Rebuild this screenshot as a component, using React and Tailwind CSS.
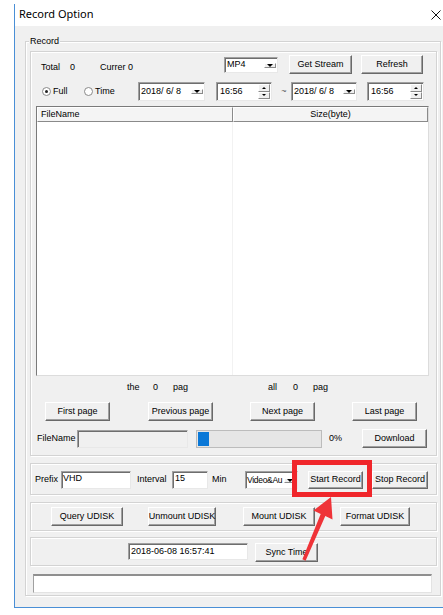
import React from 'react';

// raised windows-classic push button
function Btn({ className = '', children }) {
    return (
        <div className={`flex shrink-0 items-center justify-center whitespace-nowrap bg-[#f0f0f0] border border-t-white border-l-white border-r-[#696969] border-b-[#696969] shadow-[inset_-1px_-1px_0_#a0a0a0] ${className}`}>
            {children}
        </div>
    );
}

// sunken edit box
function Field({ className = '', children }) {
    return (
        <div className={`flex shrink-0 items-center overflow-hidden whitespace-pre border border-t-[#a0a0a0] border-l-[#a0a0a0] border-r-[#e8e8e8] border-b-[#e8e8e8] shadow-[inset_1px_1px_0_#6e6e6e] ${className}`}>
            {children}
        </div>
    );
}

const Down = () => (
    <div className="w-0 h-0 border-l-[3px] border-r-[3px] border-t-[3px] border-l-transparent border-r-transparent border-t-black" />
);

function DropBtn() {
    return (
        <div className="flex w-[12px] shrink-0 items-center justify-center my-[1px] mr-[1px] bg-[#f0f0f0] border border-t-white border-l-white border-r-[#8a8a8a] border-b-[#8a8a8a]">
            <Down />
        </div>
    );
}

function Combo({ className = '', text, textClass = 'pl-[2px]' }) {
    return (
        <Field className={`bg-white ${className}`}>
            <span className={`flex-1 overflow-hidden ${textClass}`}>{text}</span>
            <DropBtn />
        </Field>
    );
}

function Spin({ className = '', text }) {
    return (
        <Field className={`bg-white ${className}`}>
            <span className="flex-1 pl-[3px]">{text}</span>
            <div className="flex w-[12px] self-stretch flex-col my-[1px] mr-[1px]">
                <div className="flex flex-1 items-center justify-center bg-[#f0f0f0] border border-t-white border-l-white border-r-[#8a8a8a] border-b-[#8a8a8a]">
                    <div className="w-0 h-0 border-l-[2px] border-r-[2px] border-b-[2px] border-l-transparent border-r-transparent border-b-black" />
                </div>
                <div className="flex flex-1 items-center justify-center bg-[#f0f0f0] border border-t-white border-l-white border-r-[#8a8a8a] border-b-[#8a8a8a]">
                    <div className="w-0 h-0 border-l-[2px] border-r-[2px] border-t-[2px] border-l-transparent border-r-transparent border-t-black" />
                </div>
            </div>
        </Field>
    );
}

function Radio({ checked, label, className = '' }) {
    return (
        <div className={`flex shrink-0 items-center ${className}`}>
            <div className="flex w-[9px] h-[9px] items-center justify-center rounded-full border border-[#8a8a8a] bg-white">
                {checked && <div className="w-[3px] h-[3px] rounded-full bg-[#222]" />}
            </div>
            <span className="ml-[2px]">{label}</span>
        </div>
    );
}

const panel = 'box-border w-[407px] border border-[#d3d3d3] shadow-[inset_1px_1px_0_#fff,1px_1px_0_#fff]';

export default function App() {
    return (
        <div className="relative w-[443px] h-[615px] overflow-hidden bg-white text-[9px] text-black font-['Liberation_Sans',Arial,sans-serif]">
            <div className="mt-[4px] ml-[14px] w-[429px] border-l border-b border-[#4a8fd6]">
                {/* title bar */}
                <div className="flex h-[22px] items-center justify-between bg-white pl-[4px] pr-[2px] pb-[2px]">
                    <span className="text-[11px] font-['Noto_Sans',sans-serif]">Record Option</span>
                    <svg width="10" height="10" viewBox="0 0 10 10" className="mt-[2px]">
                        <path d="M0.5 0.5 L9.5 9.5 M9.5 0.5 L0.5 9.5" stroke="#111" strokeWidth="1" />
                    </svg>
                </div>

                <div className="h-[581px] bg-[#f0f0f0] pt-[15px]">
                    {/* Record group */}
                    <div className="relative box-border ml-[10px] w-[416px] h-[555px] border border-[#d3d3d3] shadow-[inset_1px_1px_0_#fff,1px_1px_0_#fff] pt-[9px] pl-[4px]">
                        <span className="absolute left-[3px] top-[-7px] bg-[#f0f0f0] px-[1px] leading-[12px]">Record</span>

                        <div className={`${panel} h-[405px] pt-[3px]`}>
                            <div className="flex h-[19px] items-start">
                                <span className="ml-[10px] w-[29px] mt-[6px] shrink-0">Total</span>
                                <span className="w-[30px] mt-[6px] shrink-0">0</span>
                                <span className="w-[124px] mt-[6px] shrink-0">Currer 0</span>
                                <Combo className="w-[54px] h-[16px] mt-[2px]" text="MP4" />
                                <Btn className="ml-[11px] w-[63px] h-[19px]">Get Stream</Btn>
                                <Btn className="ml-[9px] w-[62px] h-[19px]">Refresh</Btn>
                            </div>

                            <div className="flex h-[19px] mt-[8px] items-center">
                                <Radio className="ml-[11px] w-[42px]" checked label="Full" />
                                <Radio className="w-[54px]" label="Time" />
                                <Combo className="w-[67px] h-[19px]" text="2018/ 6/ 8" />
                                <Spin className="ml-[11px] w-[56px] h-[19px]" text="16:56" />
                                <span className="ml-[5px] w-[14px] text-center text-[#555]">~</span>
                                <Combo className="w-[66px] h-[19px]" text="2018/ 6/ 8" />
                                <Spin className="ml-[10px] w-[57px] h-[19px]" text="16:56" />
                            </div>

                            {/* file list */}
                            <div className="box-border mt-[5px] ml-[5px] w-[393px] h-[270px] bg-white border border-t-[#7a7a7a] border-l-[#7a7a7a] border-r-[#dcdcdc] border-b-[#dcdcdc] flex flex-col">
                                <div className="flex h-[15px]">
                                    <div className="flex w-[196px] items-center bg-[#f4f4f4] border border-t-white border-l-white border-r-[#8a8a8a] border-b-[#8a8a8a] pl-[3px]">FileName</div>
                                    <div className="flex flex-1 items-center justify-center bg-[#f4f4f4] border border-t-white border-l-white border-r-[#8a8a8a] border-b-[#8a8a8a]">Size(byte)</div>
                                </div>
                                <div className="flex flex-1">
                                    <div className="w-[196px] border-r border-[#f2f2f2]" />
                                    <div className="flex-1" />
                                </div>
                            </div>

                            <div className="flex h-[13px] mt-[5px] items-center">
                                <span className="ml-[96px] w-[26px] shrink-0">the</span>
                                <span className="w-[20px] shrink-0">0</span>
                                <span className="w-[95px] shrink-0">pag</span>
                                <span className="w-[25px] shrink-0">all</span>
                                <span className="w-[20px] shrink-0">0</span>
                                <span>pag</span>
                            </div>

                            <div className="flex h-[19px] mt-[8px]">
                                <Btn className="ml-[14px] w-[65px]">First page</Btn>
                                <Btn className="ml-[38px] w-[65px]">Previous page</Btn>
                                <Btn className="ml-[37px] w-[65px]">Next page</Btn>
                                <Btn className="ml-[37px] w-[65px]">Last page</Btn>
                            </div>

                            <div className="flex h-[19px] mt-[8px] items-center">
                                <span className="ml-[6px] w-[40px] shrink-0">FileName</span>
                                <Field className="w-[111px] h-[18px] bg-[#f0f0f0]" />
                                <div className="flex ml-[8px] w-[126px] h-[18px] border border-[#bcbcbc] bg-[#e6e6e6] p-[1px]">
                                    <div className="w-[11px] bg-[#0a78d7]" />
                                </div>
                                <span className="ml-[7px] w-[33px] shrink-0">0%</span>
                                <Btn className="w-[65px] h-[19px]">Download</Btn>
                            </div>
                        </div>

                        {/* record settings */}
                        <div className={`${panel} mt-[7px] h-[32px] pt-[7px]`}>
                            <div className="flex h-[18px] items-center">
                                <span className="ml-[4px] w-[26px] shrink-0">Prefix</span>
                                <Field className="w-[70px] h-[18px] bg-white items-start pl-[1px]">VHD</Field>
                                <span className="ml-[6px] w-[35px] shrink-0">Interval</span>
                                <Field className="w-[36px] h-[18px] bg-white items-start pl-[2px]">15</Field>
                                <span className="ml-[4px] w-[33px] shrink-0">Min</span>
                                <Combo className="w-[53px] h-[18px]" text="Video&Au" textClass="pl-[1px] text-[8.5px] tracking-[-0.3px]" />
                                <Btn className="ml-[10px] w-[55px] h-[18px]">Start Record</Btn>
                                <Btn className="ml-[9px] w-[56px] h-[18px]">Stop Record</Btn>
                            </div>
                        </div>

                        {/* udisk */}
                        <div className={`${panel} mt-[7px] h-[29px] pt-[4px]`}>
                            <div className="flex h-[19px]">
                                <Btn className="ml-[20px] w-[72px]">Query UDISK</Btn>
                                <Btn className="ml-[25px] w-[68px]">Unmount UDISK</Btn>
                                <Btn className="ml-[27px] w-[72px]">Mount UDISK</Btn>
                                <Btn className="ml-[25px] w-[70px]">Format UDISK</Btn>
                            </div>
                        </div>

                        {/* device time */}
                        <div className={`${panel} mt-[6px] h-[29px] pt-[5px]`}>
                            <div className="flex h-[19px] items-start">
                                <Field className="ml-[97px] w-[120px] h-[17px] bg-white pl-[2px]">2018-06-08 16:57:41</Field>
                                <Btn className="ml-[7px] w-[63px] h-[19px]">Sync Time</Btn>
                            </div>
                        </div>

                        {/* status line */}
                        <div className="box-border mt-[8px] ml-[3px] w-[399px] h-[19px] bg-white border-t-2 border-l border-r border-b border-t-[#8f8f8f] border-l-[#a0a0a0] border-r-[#e3e3e3] border-b-[#e3e3e3]" />
                    </div>
                </div>
            </div>

            {/* red annotation */}
            <svg className="absolute left-0 top-0 pointer-events-none" width="443" height="615" viewBox="0 0 443 615">
                <rect x="294.5" y="462.5" width="75" height="32" fill="none" stroke="#f0262b" strokeWidth="5" />
                <polygon
                    points="331,497 332.5,519.5 325.3,516 305.6,560.8 302.4,559.2 320.7,514 313.5,510.5"
                    fill="#ef3338"
                />
            </svg>
        </div>
    );
}
